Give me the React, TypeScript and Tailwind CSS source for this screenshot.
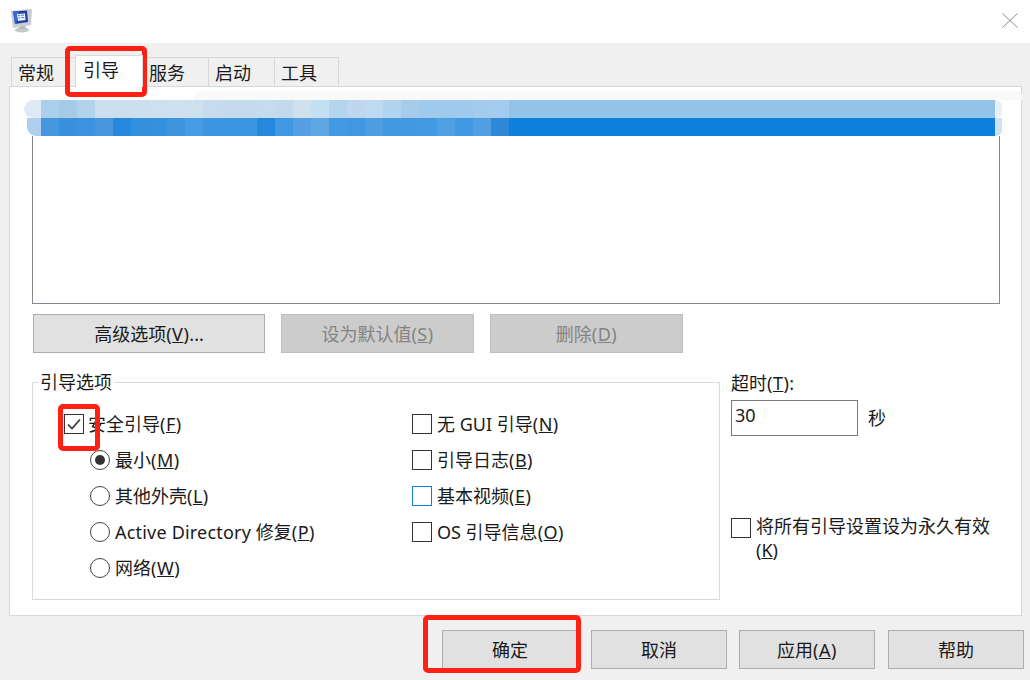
const topCells = [
  '#a9cfea', '#a5cbe8', '#b3d3ec', '#cbdfee', '#cddfee', '#cddfee', '#cde0ee', '#cfe1ee', '#cde0ee',
  '#c6dcee', '#c4daef', '#c4daef', '#c5dbef', '#c3d9ec', '#d0e1ee', '#c3dff2', '#b5d5ef', '#bed7ef',
  '#bfd9f0', '#b2d4ef', '#a5cceb', '#9dcaed', '#9ecaec', '#a0caed', '#a4caec', '#a3ccee',
];

const bottomCells = [
  '#4596df', '#3a90dd', '#3d92dd', '#4696dd', '#2588dd', '#3290dd', '#3590dd', '#3f94de', '#489ce3',
  '#3f96e0', '#3c97e1', '#3c97e1', '#2489dd', '#4097e2', '#559fe3', '#5fa7e3', '#4399e2', '#4198e1',
  '#4e9de2', '#4299e2', '#4299e2', '#4399e2', '#51a0e4', '#4298e2', '#509fe3', '#2f88d7',
];

const Label = ({ text, hot, after }: { text: React.ReactNode; hot: string; after?: string }) => (
  <span className="whitespace-nowrap">
    {text}
    <span className="tracking-[0.5px]">
      (<u>{hot}</u>)
    </span>
    {after}
  </span>
);

const Tab = ({ label, width }: { label: string; width: string }) => (
  <div className={`${width} h-[29px] -ml-px border border-b-0 border-[#d9d9d9] bg-[#f0f0f0] pl-[6px] text-[18px] leading-[30px] text-[#1a1a1a]`}>
    {label}
  </div>
);

const Check = ({ blue, checked }: { blue?: boolean; checked?: boolean }) => (
  <span
    className={`w-[20px] h-[20px] shrink-0 border bg-white flex items-center justify-center ${
      blue ? 'border-[#0f7fd8]' : 'border-[#333333]'
    }`}
  >
    {checked && (
      <svg width="14" height="12" viewBox="0 0 14 12" fill="none">
        <path d="M1 6.5 L5 10.5 L13 1.5" stroke="#333333" strokeWidth="1.6" />
      </svg>
    )}
  </span>
);

const Radio = ({ checked }: { checked?: boolean }) => (
  <span className="w-[20px] h-[20px] shrink-0 rounded-full border border-[#444444] bg-white flex items-center justify-center">
    {checked && <span className="w-[10px] h-[10px] rounded-full bg-[#333333]" />}
  </span>
);

const Row = ({ children, indent }: { children: React.ReactNode; indent?: boolean }) => (
  <div className={`h-[20px] flex items-center gap-[5px] text-[18px] leading-[20px] text-[#1a1a1a] ${indent ? 'ml-[26px]' : ''}`}>
    {children}
  </div>
);

const PanelButton = ({ children, disabled, width }: { children: React.ReactNode; disabled?: boolean; width: string }) => (
  <div
    className={`${width} h-[39px] pt-px border flex items-center justify-center text-[18px] ${
      disabled ? 'bg-[#cccccc] border-[#bfbfbf] text-[#838383]' : 'bg-[#e1e1e1] border-[#adadad] text-[#1a1a1a]'
    }`}
  >
    {children}
  </div>
);

const AppIcon = () => (
  <svg width="24" height="24" viewBox="0 0 24 24">
    <ellipse cx="12" cy="21" rx="7" ry="2.5" fill="#c4c8c6" />
    <path d="M9 17 L15 16 L16 20 L9 20 Z" fill="#b5bab8" />
    <path d="M1 2 L22 0 L21 16 L3 19 Z" fill="#c9cdd3" />
    <path d="M3 2.5 L17 1.5 L18 13 L5 15 Z" fill="#22409f" />
    <path d="M3 2.5 L9 2 L6 14.8 L5 15 Z" fill="#3d68d8" />
    <path d="M7 5 L15 4.5 L15.5 11 L8 12 Z" fill="#f2f6fb" />
    <path d="M8 6.5 L10 6.4 M8.3 9 L10.2 8.8 M11 6.3 L14 6.1 M11.2 8.7 L14.2 8.4" stroke="#4a7fa8" strokeWidth="1" />
  </svg>
);

export default function App() {
  return (
    <div className="relative w-[1030px] h-[680px] overflow-hidden bg-[#f0f0f0] font-['Noto_Sans','Noto_Sans_CJK_SC',sans-serif]">
      {/* title bar */}
      <div className="h-[43px] bg-white flex items-start justify-between pl-[10px] pr-[12px]">
        <div className="pt-[9px]">
          <AppIcon />
        </div>
        <svg className="mt-[13px]" width="16" height="15" viewBox="0 0 16 15" fill="none">
          <path d="M0.5 0.5 L15.5 14.5 M15.5 0.5 L0.5 14.5" stroke="#8c8c8c" strokeWidth="1" />
        </svg>
      </div>

      {/* tabs */}
      <div className="h-[43px] pl-[11px] flex items-end">
        <div className="w-[65px] h-[29px] border border-b-0 border-[#d9d9d9] bg-[#f0f0f0] pl-[6px] text-[18px] leading-[30px] text-[#1a1a1a]">
          常规
        </div>
        <div className="w-[68px] h-[32px] -ml-px -mb-px z-10 border border-b-0 border-[#d9d9d9] bg-white pl-[7px] text-[18px] leading-[28px] text-[#1a1a1a]">
          引导
        </div>
        <Tab label="服务" width="w-[67px]" />
        <Tab label="启动" width="w-[67px]" />
        <Tab label="工具" width="w-[65px]" />
      </div>

      {/* panel */}
      <div className="ml-[9px] w-[1013px] h-[530px] border border-[#d9d9d9] bg-white pt-[4px] pl-[22px]">
        <div className="ml-[161px] w-[830px] h-[9px] rounded-t-[8px] bg-[#f9f9f9]" />
        <div className="flex -ml-[8px]">
          <div className="w-[17px] flex flex-col">
            <div className="h-[18px] rounded-tl-[9px] rounded-bl-[9px] bg-[#dfeaf4]" />
            <div className="h-[18px] ml-[3px] rounded-bl-[9px] bg-[#aed0ee]" />
          </div>
          <div className="flex flex-col">
            <div className="flex h-[18px]">
              {topCells.map((c, i) => (
                <div key={i} className="w-[18px]" style={{ backgroundColor: c }} />
              ))}
              <div className="w-[486px] bg-[#94c3ea]" />
            </div>
            <div className="flex h-[18px]">
              {bottomCells.map((c, i) => (
                <div key={i} className="w-[18px]" style={{ backgroundColor: c }} />
              ))}
              <div className="w-[486px] bg-[#0e7fdb]" />
            </div>
          </div>
          <div className="w-[7px] flex flex-col">
            <div className="h-[18px] rounded-r-[6px] bg-[#e8eff6]" />
            <div className="h-[18px] rounded-br-[6px] bg-[#d0e2f2]" />
          </div>
        </div>

        {/* boot entry list */}
        <div className="w-[968px] h-[168px] border border-t-0 border-[#828790]" />

        <div className="mt-[10px] ml-px flex gap-[16px]">
          <PanelButton width="w-[232px]">
            <Label text="高级选项" hot="V" after="..." />
          </PanelButton>
          <PanelButton width="w-[193px]" disabled>
            <Label text="设为默认值" hot="S" />
          </PanelButton>
          <PanelButton width="w-[193px]" disabled>
            <Label text="删除" hot="D" />
          </PanelButton>
        </div>

        <div className="mt-[29px] flex">
          {/* boot options */}
          <div className="relative w-[688px] h-[218px] border border-[#d9d9d9] pt-[31px] pl-[31px] flex">
            <span className="absolute left-[5px] -top-[13px] bg-white px-[2px] text-[18px] leading-[24px] text-[#1a1a1a]">
              引导选项
            </span>
            <div className="w-[348px] flex flex-col gap-[16px]">
              <div className="h-[20px] flex items-center gap-[4px] text-[18px] leading-[20px] text-[#1a1a1a]">
                <Check checked />
                <Label text="安全引导" hot="F" />
              </div>
              <Row indent>
                <Radio checked />
                <Label text="最小" hot="M" />
              </Row>
              <Row indent>
                <Radio />
                <Label text="其他外壳" hot="L" />
              </Row>
              <Row indent>
                <Radio />
                <Label text={<><span className="tracking-[0.2px]">Active Directory</span> 修复</>} hot="P" />
              </Row>
              <Row indent>
                <Radio />
                <Label text="网络" hot="W" />
              </Row>
            </div>
            <div className="flex flex-col gap-[16px]">
              <Row>
                <Check />
                <Label text="无 GUI 引导" hot="N" />
              </Row>
              <Row>
                <Check />
                <Label text="引导日志" hot="B" />
              </Row>
              <Row>
                <Check blue />
                <Label text="基本视频" hot="E" />
              </Row>
              <Row>
                <Check />
                <Label text="OS 引导信息" hot="O" />
              </Row>
            </div>
          </div>

          {/* timeout */}
          <div className="ml-[11px] -mt-[11px] flex flex-col text-[18px] text-[#1a1a1a]">
            <div className="h-[24px] leading-[24px]">
              <Label text="超时" hot="T" after=":" />
            </div>
            <div className="mt-[5px] flex items-center gap-[10px]">
              <div className="w-[127px] h-[36px] border border-[#7a7a7a] pl-[3px] leading-[28px]">30</div>
              <span>秒</span>
            </div>
            <div className="mt-[82px] flex items-start gap-[5px] w-[270px] leading-[24px]">
              <Check />
              <span className="-mt-[4px]">
                将所有引导设置设为永久有效
                <br />
                (<u>K</u>)
              </span>
            </div>
          </div>
        </div>
      </div>

      {/* dialog buttons */}
      <div className="mt-[14px] ml-[442px] flex gap-[13px]">
        <PanelButton width="w-[136px]">确定</PanelButton>
        <PanelButton width="w-[136px]">取消</PanelButton>
        <div className="-ml-px">
          <PanelButton width="w-[136px]">
            <Label text="应用" hot="A" />
          </PanelButton>
        </div>
        <PanelButton width="w-[136px]">帮助</PanelButton>
      </div>

      {/* red annotation boxes */}
      <div className="absolute left-[65px] top-[46px] w-[82px] h-[51px] rounded-[5px] border-[5px] border-[#ff2014]" />
      <div className="absolute left-[58px] top-[404px] w-[42px] h-[47px] rounded-[5px] border-[5px] border-[#ff2014]" />
      <div className="absolute left-[423px] top-[615px] w-[158px] h-[58px] rounded-[5px] border-[5px] border-[#ff2014]" />
    </div>
  );
}
